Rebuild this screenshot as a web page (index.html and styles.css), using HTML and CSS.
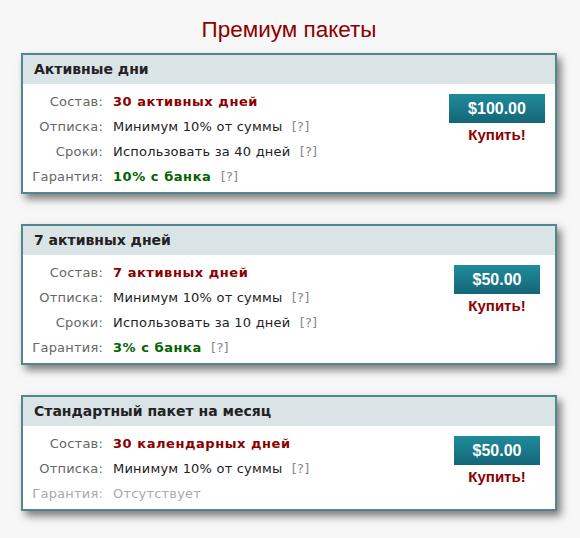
FILE: index.html
```html
<!DOCTYPE html>
<html lang="ru">
<head>
<meta charset="utf-8">
<link rel="stylesheet" href="styles.css">
</head>
<body>
<h1 class="title">Премиум пакеты</h1>

<div class="card">
  <div class="card-head">Активные дни</div>
  <div class="card-body">
    <div class="rows">
      <div class="label">Состав:</div><div class="value strong red">30 активных дней</div>
      <div class="label">Отписка:</div><div class="value">Минимум 10% от суммы <span class="help">[?]</span></div>
      <div class="label">Сроки:</div><div class="value">Использовать за 40 дней <span class="help">[?]</span></div>
      <div class="label">Гарантия:</div><div class="value"><span class="strong green">10% с банка</span> <span class="help">[?]</span></div>
    </div>
    <div class="buy">
      <div class="price">$100.00</div>
      <div class="buy-link">Купить!</div>
    </div>
  </div>
</div>

<div class="card">
  <div class="card-head">7 активных дней</div>
  <div class="card-body">
    <div class="rows">
      <div class="label">Состав:</div><div class="value strong red">7 активных дней</div>
      <div class="label">Отписка:</div><div class="value">Минимум 10% от суммы <span class="help">[?]</span></div>
      <div class="label">Сроки:</div><div class="value">Использовать за 10 дней <span class="help">[?]</span></div>
      <div class="label">Гарантия:</div><div class="value"><span class="strong green">3% с банка</span> <span class="help">[?]</span></div>
    </div>
    <div class="buy">
      <div class="price small">$50.00</div>
      <div class="buy-link">Купить!</div>
    </div>
  </div>
</div>

<div class="card">
  <div class="card-head">Стандартный пакет на месяц</div>
  <div class="card-body">
    <div class="rows">
      <div class="label">Состав:</div><div class="value strong red">30 календарных дней</div>
      <div class="label">Отписка:</div><div class="value">Минимум 10% от суммы <span class="help">[?]</span></div>
      <div class="label muted">Гарантия:</div><div class="value muted">Отсутствует</div>
    </div>
    <div class="buy">
      <div class="price small">$50.00</div>
      <div class="buy-link">Купить!</div>
    </div>
  </div>
</div>
</body>
</html>
```

FILE: styles.css
```css
html, body {
  margin: 0;
  padding: 0;
}
body {
  background: #f7f7f7;
  font-family: "DejaVu Sans", Verdana, sans-serif;
  font-size: 13px;
  letter-spacing: 0.2px;
  color: #222;
  padding: 0 23px 20px 21px;
}
.title {
  margin: 0;
  padding: 16px 0 9px;
  text-align: center;
  font-family: "Liberation Sans", Arial, sans-serif;
  font-weight: normal;
  font-size: 22.5px;
  line-height: 28px;
  letter-spacing: 0;
  color: #8b0000;
}
.card {
  border: 2px solid #4f878c;
  background: #fff;
  box-shadow: 4px 5px 8px rgba(0, 0, 0, 0.5);
  margin-bottom: 30px;
}
.card-head {
  background: #dae4e6;
  height: 29px;
  line-height: 29px;
  padding-left: 11px;
  font-weight: bold;
  font-size: 14px;
  letter-spacing: 0;
  color: #222;
}
.card-body {
  display: flex;
  justify-content: space-between;
  padding: 5px 10px 3px 0;
}
.rows {
  display: grid;
  grid-template-columns: 80px auto;
  column-gap: 10px;
  grid-auto-rows: 25px;
  align-items: center;
}
.label {
  text-align: right;
  color: #666;
}
.value {
  white-space: nowrap;
}
.strong {
  font-weight: bold;
  letter-spacing: 0.55px;
}
.red { color: #8b0000; }
.green { color: #006400; }
.help {
  color: #888;
  margin-left: 5px;
}
.muted { color: #aaa; }
.buy {
  width: 96px;
  display: flex;
  flex-direction: column;
  align-items: center;
  padding-top: 5px;
  letter-spacing: 0;
}
.price {
  width: 96px;
  height: 29px;
  line-height: 29px;
  text-align: center;
  color: #fff;
  font-family: "Liberation Sans", Arial, sans-serif;
  font-weight: bold;
  font-size: 16px;
  background: linear-gradient(#1f8c9c, #146577);
}
.price.small { width: 86px; }
.buy-link {
  margin-top: 3px;
  font-family: "Liberation Sans", Arial, sans-serif;
  font-weight: bold;
  font-size: 15px;
  color: #8b0000;
}
```
